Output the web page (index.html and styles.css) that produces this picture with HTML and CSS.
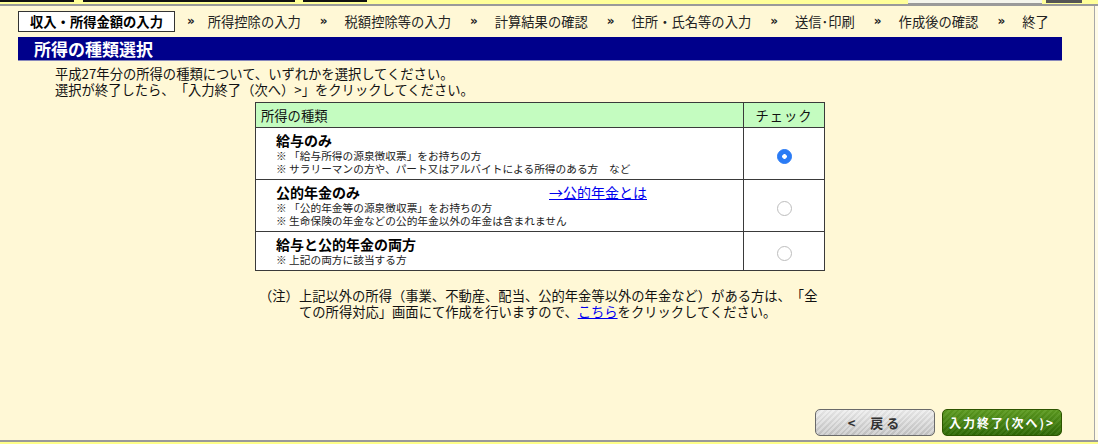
FILE: index.html
```html
<!DOCTYPE html>
<html lang="ja">
<head>
  <meta charset="UTF-8" />
  <meta name="viewport" content="width=device-width, initial-scale=1.0"/>
  <title>所得の種類選択</title>
  <link rel="stylesheet" href="styles.css">
</head>
<body>
  <div class="top-strip">
    <span class="tab-end tab-a"></span>
    <span class="tab-end tab-b"></span>
    <span class="tab-end tab-c"></span>
    <span class="tab-end tab-field"></span>
    <span class="tab-end tab-btn"></span>
  </div>

  <div class="page">
    <div class="steps">
      <span class="step current">収入・所得金額の入力</span>
      <span class="sep">»</span>
      <span class="step">所得控除の入力</span>
      <span class="sep">»</span>
      <span class="step">税額控除等の入力</span>
      <span class="sep">»</span>
      <span class="step">計算結果の確認</span>
      <span class="sep">»</span>
      <span class="step">住所・氏名等の入力</span>
      <span class="sep">»</span>
      <span class="step">送信･印刷</span>
      <span class="sep">»</span>
      <span class="step">作成後の確認</span>
      <span class="sep">»</span>
      <span class="step">終了</span>
    </div>

    <div class="content">
      <h1 class="title-bar">所得の種類選択</h1>

      <p class="intro">
        平成27年分の所得の種類について、いずれかを選択してください。<br>
        選択が終了したら、「入力終了（次へ）&gt;」をクリックしてください。
      </p>

      <table class="kinds">
        <tr>
          <th class="kind-col">所得の種類</th>
          <th class="check-col">チェック</th>
        </tr>
        <tr>
          <td class="kind-cell">
            <label for="kind-salary">
              <span class="kind-name">給与のみ</span>
              <span class="kind-note">※ 「給与所得の源泉徴収票」をお持ちの方</span>
              <span class="kind-note">※ サラリーマンの方や、パート又はアルバイトによる所得のある方　など</span>
            </label>
          </td>
          <td class="check-cell"><input type="radio" name="kind" id="kind-salary" checked></td>
        </tr>
        <tr>
          <td class="kind-cell">
            <div class="kind-head">
              <label for="kind-pension" class="kind-name">公的年金のみ</label>
              <a href="#" class="kind-link">→公的年金とは</a>
            </div>
            <span class="kind-note">※ 「公的年金等の源泉徴収票」をお持ちの方</span>
            <span class="kind-note">※ 生命保険の年金などの公的年金以外の年金は含まれません</span>
          </td>
          <td class="check-cell"><input type="radio" name="kind" id="kind-pension"></td>
        </tr>
        <tr>
          <td class="kind-cell">
            <label for="kind-both">
              <span class="kind-name">給与と公的年金の両方</span>
              <span class="kind-note">※ 上記の両方に該当する方</span>
            </label>
          </td>
          <td class="check-cell"><input type="radio" name="kind" id="kind-both"></td>
        </tr>
      </table>

      <p class="notice">
        （注）上記以外の所得（事業、不動産、配当、公的年金等以外の年金など）がある方は、「全<br>ての所得対応」画面にて作成を行いますので、<a href="#">こちら</a>をクリックしてください。
      </p>

      <div class="actions">
        <button type="button" class="btn btn-back">&lt;&nbsp;&nbsp;戻る</button>
        <button type="button" class="btn btn-next">入力終了(次へ)&gt;</button>
      </div>
    </div>
  </div>

  <div class="bottom-strip"></div>
</body>
</html>
```

FILE: styles.css
```css
body {
  margin: 0;
  height: 444px;
  overflow: hidden;
  display: flex;
  flex-direction: column;
  background-color: #fffbe6;
  font-family: "Noto Sans CJK JP", "Noto Sans", sans-serif;
  color: #111;
  text-spacing-trim: space-all;
}
.top-strip {
  display: flex;
  height: 4px;
  background-color: #ffff99;
  border-bottom: 2px solid #9a9a9a;
}
.tab-end {
  display: block;
  height: 2px;
  background-color: #111;
}
.tab-a { width: 74px; }
.tab-b { width: 212px; margin-left: 9px; }
.tab-c { width: 64px; margin-left: 8px; }
.tab-field {
  width: 134px;
  height: 3px;
  margin-left: 541px;
  background-color: #f4f4ec;
  border-bottom: 1px solid #999;
}
.tab-btn {
  width: 36px;
  height: 3px;
  margin-left: 4px;
  background-color: #555;
}
.page {
  flex: 1;
  width: 1094px;
  background-color: #fff8d6;
  border-right: 1px solid #a8a8a8;
  display: flex;
  flex-direction: column;
}
.steps {
  display: flex;
  align-items: center;
  margin: 5px 0 0 18px;
  height: 20px;
  font-size: 13.3px;
  color: #222;
}
.step {
  white-space: nowrap;
}
.step.current {
  background-color: #fff;
  border: 1px solid #333;
  padding: 0 11px;
  height: 19px;
  line-height: 19px;
  font-weight: bold;
  color: #000;
}
.sep {
  font-size: 12px;
  font-weight: bold;
  margin: 0 17px 0 19px;
  font-family: "DejaVu Sans", sans-serif;
}
.step.current + .sep {
  margin: 0 13px 0 12px;
}
.content {
  flex: 1;
  width: 1044px;
  margin-left: 18px;
  display: flex;
  flex-direction: column;
}
.title-bar {
  margin: 6px 0 0 0;
  height: 23px;
  line-height: 23px;
  padding-left: 16px;
  background-color: #00008b;
  border-bottom: 1px solid #8888bb;
  color: #fff;
  font-size: 17px;
  font-weight: bold;
}
.intro {
  margin: 5px 0 0 37px;
  font-size: 13.3px;
  line-height: 16px;
}
.kinds {
  margin: 4px auto 0 auto;
  width: 570px;
  border-collapse: collapse;
  background-color: #fff;
}
.kinds th, .kinds td {
  border: 1px solid #3a3a3a;
  padding: 0;
}
.kinds th {
  background-color: #c4fcc0;
  height: 24px;
  font-size: 13.3px;
  font-weight: normal;
}
.kind-col {
  text-align: left;
  padding-left: 5px !important;
}
.check-col {
  width: 80px;
  text-align: center;
  letter-spacing: 1px;
}
.kind-cell {
  padding: 4px 0 4px 20px !important;
}
.kind-cell label {
  display: block;
}
.kind-head {
  display: flex;
  align-items: baseline;
}
.kind-name {
  display: block;
  width: 273px;
  font-size: 14px;
  font-weight: bold;
  line-height: 17px;
  color: #000;
}
.kind-note {
  display: block;
  font-size: 10.7px;
  line-height: 13px;
  color: #222;
}
.kind-link {
  font-size: 14px;
  line-height: 17px;
  color: #0000ee;
}
.check-cell {
  text-align: center;
  vertical-align: middle;
}
.check-cell input {
  appearance: none;
  width: 15px;
  height: 15px;
  margin: 0;
  border-radius: 50%;
  border: 1px solid #bdbdbd;
  background-color: #fff;
  vertical-align: middle;
}
.check-cell input:checked {
  border-color: #2a7bf5;
  background: radial-gradient(circle, #fff 0, #fff 2px, #2a7bf5 2.6px);
}
.notice {
  margin: 17px auto 0 auto;
  width: 522px;
  padding-left: 40px;
  text-indent: -40px;
  font-size: 13.3px;
  line-height: 16px;
  white-space: nowrap;
}
.notice a {
  color: #0000ee;
}
.actions {
  margin-top: auto;
  margin-bottom: 4px;
  display: flex;
  justify-content: flex-end;
  gap: 7px;
}
.btn {
  width: 120px;
  height: 27px;
  border-radius: 5px;
  font-family: "Noto Sans CJK JP", sans-serif;
  font-size: 12px;
  font-weight: bold;
  letter-spacing: 3px;
  cursor: pointer;
  padding: 0;
}
.btn-back {
  border: 1px solid #6a6a6a;
  color: #333;
  background:
    repeating-linear-gradient(135deg, rgba(255,255,255,0.25) 0 2px, rgba(0,0,0,0.03) 2px 4px),
    linear-gradient(#ececec, #c4c4c4);
  font-size: 13px;
}
.btn-next {
  border: 1px solid #2d5500;
  color: #fff;
  background:
    repeating-linear-gradient(135deg, rgba(255,255,255,0.06) 0 2px, rgba(0,0,0,0.04) 2px 4px),
    linear-gradient(#5d9c20, #2f6a05);
  letter-spacing: 2px;
}
.bottom-strip {
  height: 2px;
  background-color: #ffff88;
  border-top: 2px solid #999;
}
```
